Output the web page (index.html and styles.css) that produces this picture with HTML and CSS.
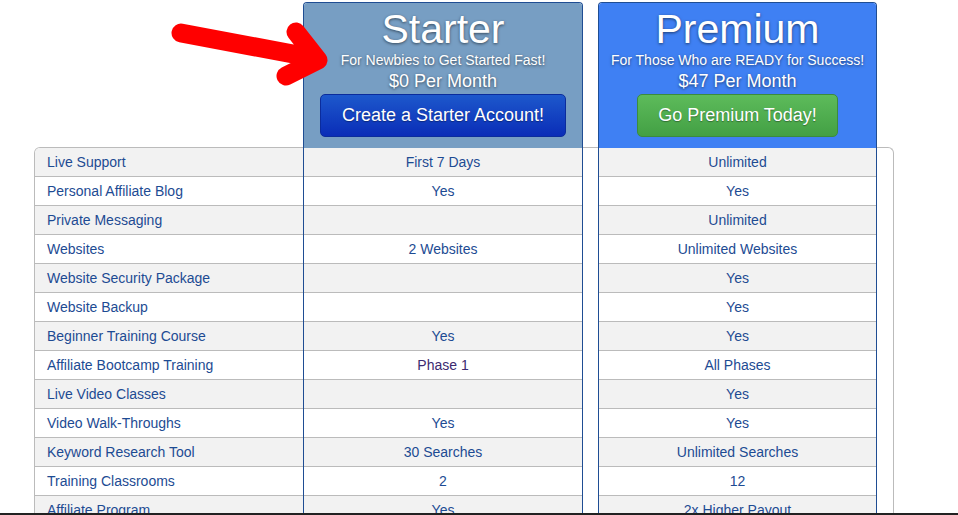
FILE: index.html
```html
<!DOCTYPE html>
<html lang="en">
<head>
  <meta charset="UTF-8" />
  <meta name="viewport" content="width=device-width, initial-scale=1.0"/>
  <title>Membership Options</title>
  <link rel="stylesheet" href="styles.css">
</head>
<body>
<div class="pricing">
  <div class="features">
    <div class="rows">
      <div class="cell">Live Support</div>
      <div class="cell">Personal Affiliate Blog</div>
      <div class="cell">Private Messaging</div>
      <div class="cell">Websites</div>
      <div class="cell">Website Security Package</div>
      <div class="cell">Website Backup</div>
      <div class="cell">Beginner Training Course</div>
      <div class="cell">Affiliate Bootcamp Training</div>
      <div class="cell">Live Video Classes</div>
      <div class="cell">Video Walk-Throughs</div>
      <div class="cell">Keyword Research Tool</div>
      <div class="cell">Training Classrooms</div>
      <div class="cell">Affiliate Program</div>
    </div>
  </div>

  <div class="plan starter">
    <div class="plan-head">
      <h2>Starter</h2>
      <p class="tagline">For Newbies to Get Started Fast!</p>
      <p class="price">$0 Per Month</p>
      <a class="btn btn-blue" href="#">Create a Starter Account!</a>
    </div>
    <div class="rows">
      <div class="cell">First 7 Days</div>
      <div class="cell">Yes</div>
      <div class="cell"></div>
      <div class="cell">2 Websites</div>
      <div class="cell"></div>
      <div class="cell"></div>
      <div class="cell">Yes</div>
      <div class="cell visited">Phase 1</div>
      <div class="cell"></div>
      <div class="cell">Yes</div>
      <div class="cell">30 Searches</div>
      <div class="cell">2</div>
      <div class="cell">Yes</div>
    </div>
  </div>

  <div class="spacer gap"></div>

  <div class="plan premium">
    <div class="plan-head">
      <h2>Premium</h2>
      <p class="tagline">For Those Who are READY for Success!</p>
      <p class="price">$47 Per Month</p>
      <a class="btn btn-green" href="#">Go Premium Today!</a>
    </div>
    <div class="rows">
      <div class="cell">Unlimited</div>
      <div class="cell">Yes</div>
      <div class="cell">Unlimited</div>
      <div class="cell">Unlimited Websites</div>
      <div class="cell">Yes</div>
      <div class="cell">Yes</div>
      <div class="cell">Yes</div>
      <div class="cell">All Phases</div>
      <div class="cell">Yes</div>
      <div class="cell">Yes</div>
      <div class="cell">Unlimited Searches</div>
      <div class="cell">12</div>
      <div class="cell">2x Higher Payout</div>
    </div>
  </div>

  <div class="spacer end"></div>
</div>

<!-- hand-drawn pointer over the starter plan -->
<svg class="arrow" width="180" height="90" viewBox="160 10 180 90">
  <path d="M181 33 L309 57 M296 32 L318 60 L286 76" fill="none" stroke="#ff0000" stroke-width="19" stroke-linecap="round" stroke-linejoin="round"/>
</svg>

<div class="frame-edge"></div>
</body>
</html>
```

FILE: styles.css
```css
body {
  margin: 0;
  font-family: "Liberation Sans", Arial, Helvetica, sans-serif;
  background: #fff;
}
.pricing {
  display: flex;
  width: 858px;
  margin: 147px 0 0 34px;
  border: 1px solid #bbb;
  border-bottom: none;
  border-radius: 6px 6px 0 0;
}
.features {
  width: 268px;
}
.cell {
  height: 28px;
  line-height: 28px;
  border-bottom: 1px solid #bbb;
  font-size: 14px;
  color: #1d4b93;
  white-space: nowrap;
}
.rows .cell:nth-child(odd) {
  background: #f2f2f2;
}
.features .cell {
  padding-left: 12px;
}
.features .cell:first-child {
  border-top-left-radius: 5px;
}
.plan {
  box-sizing: border-box;
  margin-top: -146px;
  border: 1px solid #1f4d93;
  border-bottom: none;
  border-radius: 4px 4px 0 0;
}
.plan .cell {
  text-align: center;
}
.plan .cell.visited {
  color: #3c2a70;
}
.starter {
  width: 280px;
}
.premium {
  width: 279px;
}
.starter .plan-head {
  background: #779ec3;
}
.premium .plan-head {
  background: #3f80f3;
}
.plan-head {
  height: 145px;
  box-sizing: border-box;
  padding-top: 4px;
  text-align: center;
  color: #fff;
  border-radius: 3px 3px 0 0;
  text-shadow: 0 1px 3px rgba(0, 0, 0, 0.55);
}
.plan-head h2 {
  margin: 0;
  font-size: 41px;
  line-height: 44px;
  font-weight: normal;
}
.tagline {
  margin: 0;
  font-size: 14px;
  line-height: 18px;
}
.price {
  margin: 0;
  font-size: 18px;
  line-height: 24px;
}
.btn {
  display: inline-block;
  margin-top: 1px;
  height: 41px;
  line-height: 41px;
  padding: 0 20px;
  font-size: 18px;
  color: #fff;
  text-decoration: none;
  border-radius: 5px;
  text-shadow: 0 1px 1px rgba(0, 0, 0, 0.35);
}
.btn-blue {
  padding: 0 21px;
  background: linear-gradient(#1d58cc, #0a2db7);
  border: 1px solid #0b2c9c;
}
.btn-green {
  background: linear-gradient(#5dbb5b, #43a044);
  border: 1px solid #3c8b3d;
}
.gap {
  width: 15px;
}
.end {
  width: 16px;
}
.arrow {
  position: absolute;
  left: 160px;
  top: 10px;
}
.frame-edge {
  position: fixed;
  left: 0;
  right: 0;
  bottom: 0;
  height: 2px;
  background: #222;
}
```
